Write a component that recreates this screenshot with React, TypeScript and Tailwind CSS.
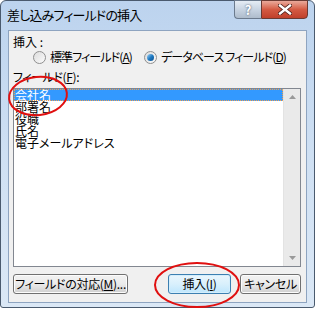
const fieldNames = ['会社名', '部署名', '役職', '氏名', '電子メールアドレス'];

function Radio({ checked }: { checked?: boolean }) {
  return (
    <span className="shrink-0 w-[13px] h-[13px] rounded-full border border-[#8f8f8f] bg-gradient-to-br from-[#dcdcdc] to-[#fbfbfb] flex items-center justify-center">
      {checked && (
        <span className="w-[7px] h-[7px] rounded-full bg-gradient-to-br from-[#9fd6f5] via-[#1f7cc4] to-[#0d4f8e]" />
      )}
    </span>
  );
}

function DlgButton({
  label,
  width,
  isDefault = false,
}: {
  label: React.ReactNode;
  width: string;
  isDefault?: boolean;
}) {
  return (
    <button
      className={`${width} h-[20px] rounded-[3px] border text-[12px] leading-none whitespace-nowrap tracking-[-0.3px] text-black flex items-center justify-center ${
        isDefault
          ? 'border-[#3c7fb1] bg-gradient-to-b from-[#eaf6fd] via-[#d9f0fc] to-[#bee6fd] shadow-[inset_0_0_0_1px_#d4eefc]'
          : 'border-[#707070] bg-gradient-to-b from-[#f2f2f2] via-[#ebebeb] to-[#cfcfcf] shadow-[inset_0_0_0_1px_#fcfcfc]'
      }`}
    >
      {label}
    </button>
  );
}

export default function App() {
  return (
    <div
      className="relative w-[315px] h-[309px] bg-white [font-feature-settings:'palt']"
      style={{ fontFamily: '"Noto Sans CJK JP", "Noto Sans", sans-serif' }}
    >
      <div className="w-[315px] h-[308px] rounded-t-[6px] rounded-b-[3px] border border-[#4a5a6e] bg-gradient-to-b from-[#bcd3ee] via-[#cfe0f3] to-[#dbe8f6] flex flex-col">
        {/* title bar */}
        <div className="h-[29px] flex items-start justify-between">
          <span className="pl-[6px] pt-[6px] text-[13px] leading-[16px] tracking-[-0.8px] whitespace-nowrap text-black">
            差し込みフィールドの挿入
          </span>
          <div className="flex mr-[6px] -mt-px">
            <div className="w-[27px] h-[19px] rounded-bl-[4px] border border-[#6b7a8d] border-r-0 bg-gradient-to-b from-[#e6edf5] via-[#c8d4e2] to-[#aebccc] flex items-center justify-center text-white text-[13px] font-bold leading-none [text-shadow:0_0_2px_#33455c]">
              ?
            </div>
            <div className="w-[47px] h-[19px] rounded-br-[4px] border border-[#6b3a33] bg-gradient-to-b from-[#e9a99b] via-[#d45a43] to-[#c0402b] flex items-center justify-center">
              <svg width="14" height="11" viewBox="0 0 14 11">
                <path
                  d="M2 1.5 L12 9.5 M12 1.5 L2 9.5"
                  stroke="#4a1e18"
                  strokeWidth="4"
                  strokeLinecap="square"
                />
                <path
                  d="M2 1.5 L12 9.5 M12 1.5 L2 9.5"
                  stroke="white"
                  strokeWidth="2.4"
                  strokeLinecap="square"
                />
              </svg>
            </div>
          </div>
        </div>

        {/* client */}
        <div className="mx-[7px] h-[273px] border border-[#8ea4c0] bg-[#f0f0f0] flex flex-col px-[4px] text-[12px] leading-[12px] text-black whitespace-nowrap">
          <div className="pt-[5px] h-[18px]">挿入 :</div>
          <div className="flex items-center h-[16px] pl-[20px] tracking-[-0.9px]">
            <Radio />
            <span className="ml-[4px]">
              標準フィールド(<u>A</u>)
            </span>
            <span className="ml-[12px]">
              <Radio checked />
            </span>
            <span className="ml-[4px]">
              データベース フィールド(<u>D</u>)
            </span>
          </div>
          <div className="h-[23px] pt-[6px] tracking-[-0.4px]">
            フィールド(<u>F</u>):
          </div>
          {/* list box */}
          <div className="h-[179px] mr-[1px] border border-[#828790] bg-white flex">
            <div className="flex-1 flex flex-col">
              {fieldNames.map((name, i) => (
                <div
                  key={name}
                  className={`h-[12px] pl-[1px] flex items-center ${
                    i === 0
                      ? 'bg-[#3399ff] text-white outline-1 outline-dotted outline-[#f0a050] -outline-offset-1'
                      : ''
                  }`}
                >
                  {name}
                </div>
              ))}
            </div>
            <div className="w-[17px] bg-[#eaeaea] border-l border-[#e3e3e3] flex flex-col justify-between items-center py-[6px]">
              <svg width="7" height="4" viewBox="0 0 7 4">
                <path d="M0 4 L3.5 0 L7 4 Z" fill="#9a9a9a" />
              </svg>
              <svg width="7" height="4" viewBox="0 0 7 4">
                <path d="M0 0 L3.5 4 L7 0 Z" fill="#9a9a9a" />
              </svg>
            </div>
          </div>
          {/* buttons */}
          <div className="flex items-center mt-[7px]">
            <DlgButton
              label={
                <>
                  フィールドの対応(<u>M</u>)...
                </>
              }
              width="w-[115px]"
            />
            <div className="ml-auto flex gap-[9px] mr-[1px]">
              <DlgButton
                label={
                  <>
                    挿入(<u>I</u>)
                  </>
                }
                width="w-[63px]"
                isDefault
              />
              <DlgButton label="キャンセル" width="w-[61px]" />
            </div>
          </div>
        </div>
      </div>

      {/* red annotation circles */}
      <svg className="absolute inset-0 pointer-events-none" width="315" height="309">
        <ellipse cx="38" cy="96" rx="29" ry="19" fill="none" stroke="#e01010" strokeWidth="2" transform="rotate(-6 38 96)" />
        <ellipse cx="197" cy="285" rx="42" ry="22" fill="none" stroke="#e01010" strokeWidth="2" />
      </svg>
    </div>
  );
}
